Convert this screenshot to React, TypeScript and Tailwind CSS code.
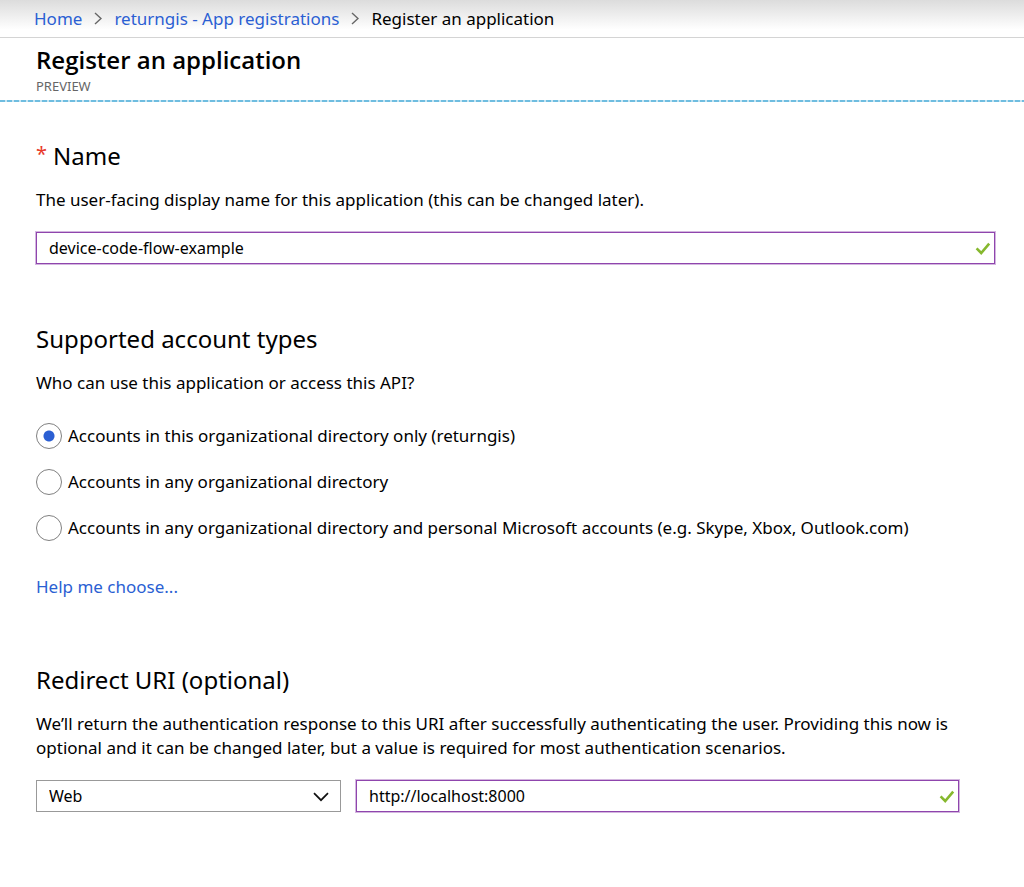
import React, { useState } from "react";

const accountTypes = [
  {
    id: "single",
    label: "Accounts in this organizational directory only (returngis)",
  },
  { id: "multi", label: "Accounts in any organizational directory" },
  {
    id: "personal",
    label:
      "Accounts in any organizational directory and personal Microsoft accounts (e.g. Skype, Xbox, Outlook.com)",
  },
];

function CrumbArrow() {
  return (
    <svg width="8" height="14" viewBox="0 0 8 14" fill="none" stroke="#666" strokeWidth="1.4" aria-hidden="true">
      <path d="M1 1 7 6.5 1 12" />
    </svg>
  );
}

function ValidIcon() {
  return (
    <svg
      className="pointer-events-none absolute right-1 top-2"
      width="16"
      height="16"
      viewBox="0 0 16 16"
      fill="none"
      stroke="#86b82e"
      strokeWidth="2.6"
      aria-hidden="true"
    >
      <path d="M1.6 8.4 6.2 13 14.2 3.6" />
    </svg>
  );
}

type ValidInputProps = {
  id: string;
  label: string;
  value: string;
  onChange: (value: string) => void;
};

function ValidInput({ id, label, value, onChange }: ValidInputProps) {
  return (
    <div className="relative">
      <input
        type="text"
        id={id}
        aria-label={label}
        value={value}
        onChange={(e) => onChange(e.target.value)}
        className="block h-8 w-full border border-[#8f45ad] bg-white pl-3 pr-8 text-base outline-none shadow-[0_0_0_1px_#d3b6df]"
      />
      {value && <ValidIcon />}
    </div>
  );
}

function App() {
  const [name, setName] = useState<string>("device-code-flow-example");
  const [account, setAccount] = useState<string>("single");
  const [platform, setPlatform] = useState<string>("Web");
  const [uri, setUri] = useState<string>("http://localhost:8000");

  return (
    <div className="min-h-screen bg-white font-['Noto_Sans','Open_Sans',sans-serif] text-[17px] leading-6 text-black">
      <nav
        aria-label="Breadcrumb"
        className="flex h-[38px] items-center gap-3 border-b border-[#d4d4d4] bg-linear-to-b from-[#dcdcdc] to-white to-80% px-[34px]"
      >
        <a href="#" className="text-[#2b5fd3]">
          Home
        </a>
        <CrumbArrow />
        <a href="#" className="text-[#2b5fd3]">
          returngis - App registrations
        </a>
        <CrumbArrow />
        <span>Register an application</span>
      </nav>

      <header className="px-9 pt-1.5 pb-1.5">
        <h1 className="font-['Open_Sans','Noto_Sans',sans-serif] text-2xl leading-8 font-semibold">
          Register an application
        </h1>
        <p className="mt-0.5 text-[13px] leading-4 text-[#666]">PREVIEW</p>
      </header>
      <div className="h-[2px] bg-[repeating-linear-gradient(90deg,#6fbde0_0_5px,#c9e5f2_5px_7px)]" />

      <main className="pr-[29px] pl-9">
        <section className="pt-9">
          <h2 className="flex items-start gap-1.5 text-2xl leading-9">
            <span className="text-xl leading-8 text-[#e8392b]">*</span>
            <label htmlFor="name" className="leading-9">
              Name
            </label>
          </h2>
          <p className="mt-3.5 mb-5">
            The user-facing display name for this application (this can be changed later).
          </p>
          <ValidInput id="name" label="Name" value={name} onChange={setName} />
        </section>

        <section className="pt-[57px]">
          <h2 className="text-2xl leading-9">Supported account types</h2>
          <p className="mt-3.5">Who can use this application or access this API?</p>
          <div className="mt-7 flex flex-col gap-5">
            {accountTypes.map((type) => (
              <label key={type.id} className="flex items-center gap-1.5">
                <input
                  type="radio"
                  name="account"
                  value={type.id}
                  checked={account === type.id}
                  onChange={() => setAccount(type.id)}
                  className="size-[26px] shrink-0 appearance-none rounded-full border border-[#808080] bg-white checked:bg-[radial-gradient(circle,#2b5fd3_5px,#fff_6px)]"
                />
                {type.label}
              </label>
            ))}
          </div>
          <a href="#" className="mt-[34px] inline-block text-[#2b5fd3]">
            Help me choose...
          </a>
        </section>

        <section className="pt-[63px]">
          <h2 className="text-2xl leading-9">Redirect URI (optional)</h2>
          <p className="mt-3.5">
            We’ll return the authentication response to this URI after successfully authenticating the user. Providing this now is optional and it can be changed later, but a value is required for most authentication scenarios.
          </p>
          <div className="mt-5 flex gap-[15px] pr-9">
            <div className="relative w-[305px]">
              <select
                aria-label="Platform"
                value={platform}
                onChange={(e) => setPlatform(e.target.value)}
                className="block h-8 w-full appearance-none border border-[#999] bg-white px-3 text-base"
              >
                <option>Web</option>
                <option>Public client (mobile &amp; desktop)</option>
              </select>
              <svg
                className="pointer-events-none absolute right-3 top-3"
                width="16"
                height="10"
                viewBox="0 0 16 10"
                fill="none"
                stroke="#111"
                strokeWidth="1.7"
                aria-hidden="true"
              >
                <path d="M1 1.2 8 8.2 15 1.2" />
              </svg>
            </div>
            <div className="flex-1">
              <ValidInput id="uri" label="Redirect URI" value={uri} onChange={setUri} />
            </div>
          </div>
        </section>
      </main>
    </div>
  );
}

export default App;
